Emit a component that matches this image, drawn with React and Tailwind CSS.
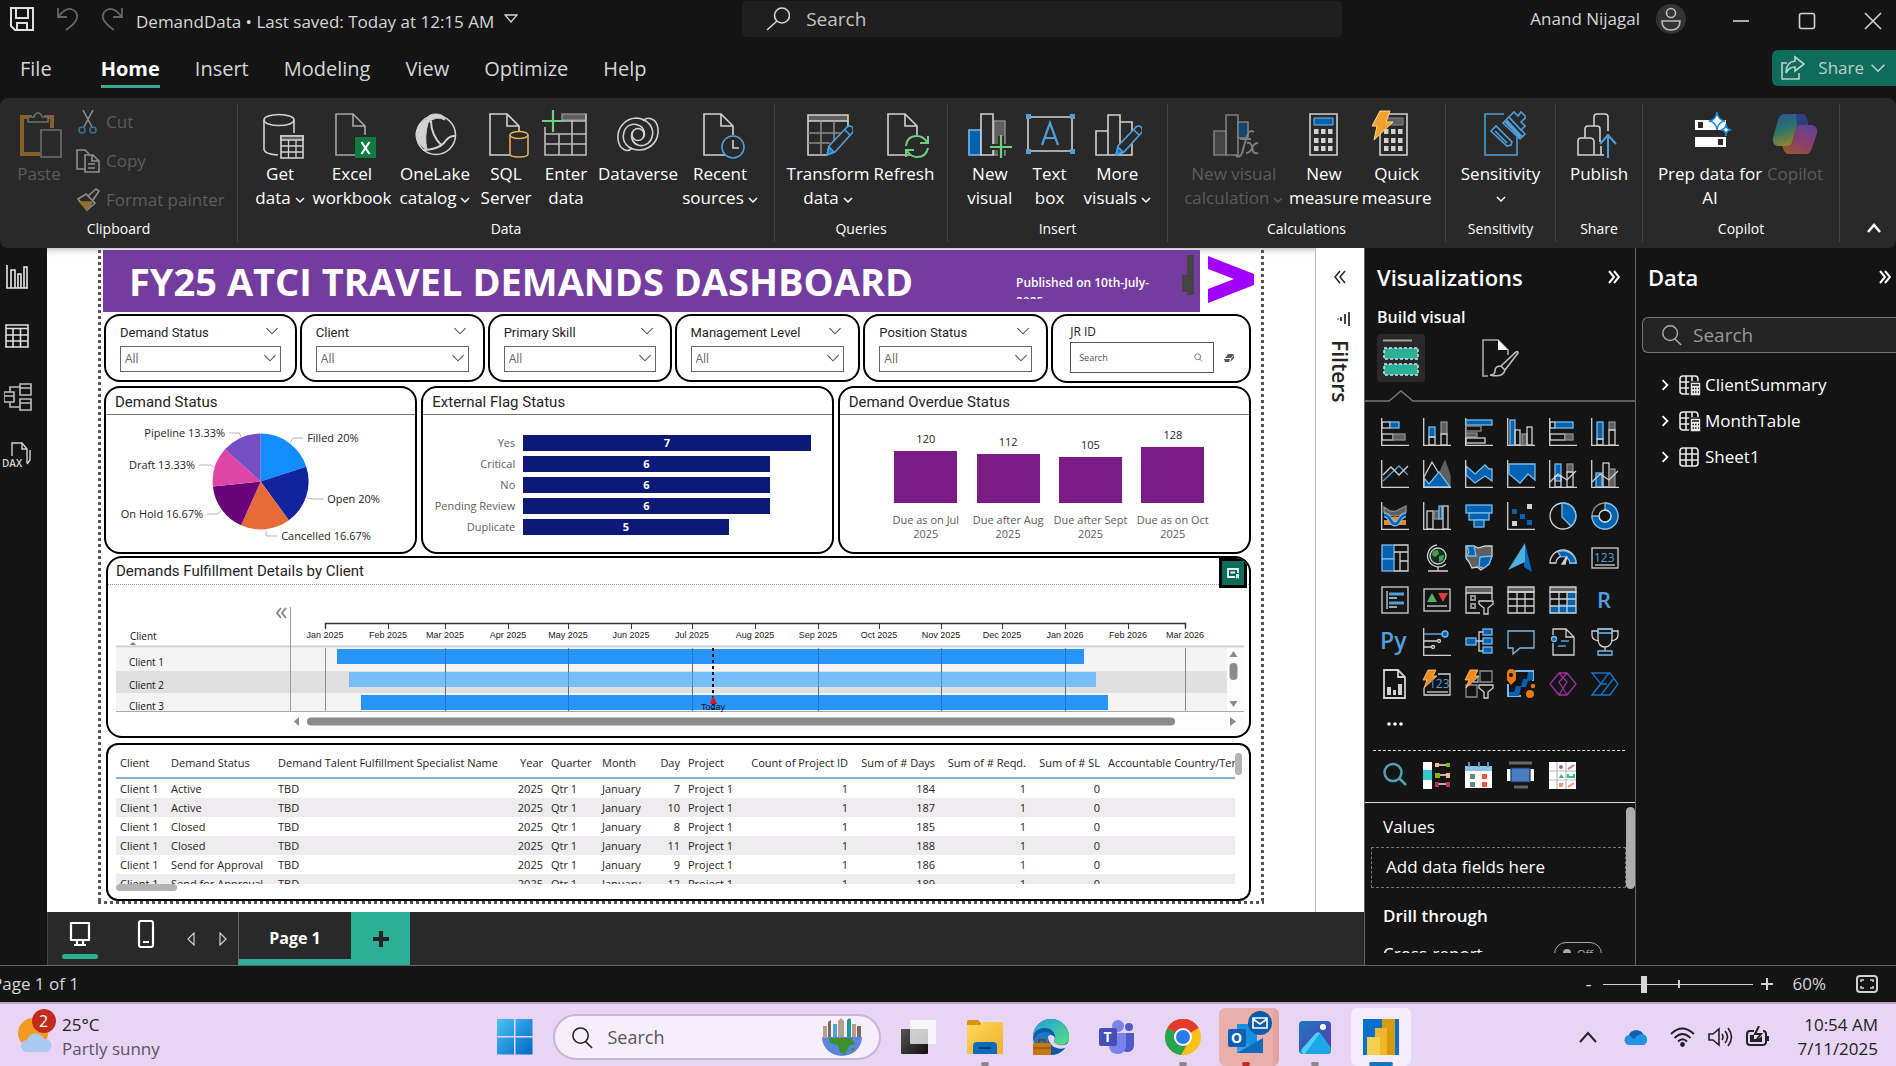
import React from "react";

const W = "#d2d2d2";
const G = "#5f5f5f";
const B = "#0062b1";
const L = "#7cb9e8";
const S = "#4f9fdc";

/* ---------- ribbon icons (50 x 50) ---------- */

function Ico({ size = 50, box = size, children, className = "" }) {
  return (
    <svg width={size} height={size} viewBox={`0 0 ${box} ${box}`} fill="none" stroke={W} strokeWidth="1.6" className={`shrink-0 ${className}`} aria-hidden="true">
      {children}
    </svg>
  );
}

const Doc = () => (
  <>
    <path d="M31 45H9V4h17l12 12v9" />
    <path d="M26 4v12h12" />
  </>
);

const Pencil = () => (
  <g>
    <path d="M24 45l2-9 18-19q3-2 5 0t1 5L32 42z" fill="#292929" stroke={S} />
    <path d="M24 45l2-8 5 5z" fill="#0078d4" stroke={S} />
    <path d="M42 20l5 5" stroke={S} />
  </g>
);

const GridTable = () => (
  <>
    <path d="M5 5h40v6H5z" fill={G} />
    <path d="M5 11v34h18M45 11v6" />
    <path d="M5 23h34M5 33h22M18 11v34M31 11v20" stroke="#8a8a8a" />
  </>
);

const Calc = ({ x = 0 }) => (
  <g transform={`translate(${x} 0)`}>
    <path d="M11 4h27v41H11z" />
    <path d="M15 8h19v7H15z" fill={x ? G : B} stroke={x ? "#8a8a8a" : L} strokeWidth="1" />
    <g fill={W} stroke="none">
      {[19, 28, 36].map((y) => [15, 22, 29].map((cx) => <rect key={cx + "-" + y} x={cx} y={y} width="4.5" height="5" />))}
    </g>
  </g>
);

const ribbonIcons = {
  paste: (
    <Ico className="opacity-60">
      <path d="M18 7H8v37h18M30 7h8v11" stroke="#c8862a" strokeWidth="4" />
      <path d="M14 12V7h6q1-4 4-4t4 4h6v5z" fill="#292929" stroke="#9a9a9a" />
      <path d="M27 20h20v27H27z" fill="#292929" stroke="#9a9a9a" />
    </Ico>
  ),
  getdata: (
    <Ico>
      <ellipse cx="24" cy="10" rx="15" ry="5.5" />
      <path d="M9 10v29q0 5 14 6M39 10v13" />
      <path d="M26 26h22v22H26z" fill="#292929" />
      <path d="M26 26h22v4H26z" fill={G} />
      <path d="M26 36h22M26 42h22M33.500 30v18M41 30v18" strokeWidth="1.300" />
    </Ico>
  ),
  excel: (
    <Ico>
      <g stroke="#a8a8a8"><Doc /></g>
      <path d="M28 27h21v21H28z" fill="#107c41" stroke="none" />
      <path d="M34.500 32l8 12M42.500 32l-8 12" stroke="#fff" strokeWidth="2.200" />
    </Ico>
  ),
  onelake: (
    <Ico>
      <path d="M17 9q1-5 9-5t9 6q-9-5-17 3-4 14-1 27Q5 33 6 23 8 13 17 9z" fill={W} strokeWidth="1" />
      <circle cx="26" cy="25" r="19.500" />
      <path d="M21 11q0 14 11 25M13 40q14 0 21-7 5-8 11-7" strokeWidth="2" />
    </Ico>
  ),
  sql: (
    <Ico>
      <Doc />
      <g stroke="#e8a95c">
        <path d="M29 25v19q0 3 9 3t9-3V25" fill="#292929" />
        <ellipse cx="38" cy="25" rx="9" ry="3.500" fill="#292929" />
      </g>
    </Ico>
  ),
  enter: (
    <Ico>
      <path d="M21 4h24v6H21z" fill={G} stroke="#8a8a8a" />
      <path d="M45 4v41H4V17M4 24h41M4 34h41M18 24v21M31 10v35M21 11h24" stroke="#bdbdbd" />
      <path d="M1 11h22M12 0v22" stroke="#6fcf7c" strokeWidth="2.200" />
    </Ico>
  ),
  dataverse: (
    <Ico>
      <path d="M19 38c-4 5-13 2-14-9C4 17 13 8 24 8c11 1 18 10 15 19-2 7-9 10-14 8-6-2-8-9-5-14" />
      <path d="M30 11c4-5 14-3 15 8 1 12-7 20-18 21-12 0-19-8-16-18 2-7 9-9 14-7 6 2 8 9 5 13" />
      <circle cx="25" cy="24.500" r="6" />
    </Ico>
  ),
  recent: (
    <Ico>
      <Doc />
      <circle cx="38" cy="37" r="11" fill="#292929" stroke={S} />
      <path d="M38 30v8h6" />
    </Ico>
  ),
  transform: (
    <Ico>
      <GridTable />
      <Pencil />
    </Ico>
  ),
  refresh: (
    <Ico>
      <Doc />
      <g stroke="#6fcf7c" strokeWidth="2">
        <path d="M27 36q1-10 11-10 6 0 10 6M49 26v7h-8M49 38q-2 9-11 9-6 0-10-6M27 47v-7h8" />
      </g>
    </Ico>
  ),
  newvisual: (
    <Ico>
      <path d="M4 20h12v25H4z" fill={B} stroke={L} />
      <path d="M29 11h11v34H29z" fill={G} stroke="#8a8a8a" />
      <path d="M16 4h12v41H16z" fill="#292929" />
      <path d="M25 37h22M36 26v22" stroke="#292929" strokeWidth="6" />
      <path d="M25 37h22M36 25v23" stroke="#6fcf7c" strokeWidth="2.200" />
    </Ico>
  ),
  textbox: (
    <Ico>
      <path d="M3 7h44v34H3z" />
      <g fill={S} stroke="none">
        <path d="M1 4h5v5H1zM45 4h5v5h-5zM1 39h5v5H1zM45 39h5v5h-5z" />
      </g>
      <path d="M17 35l8-22 8 22M20 28h10" stroke={S} strokeWidth="2.200" />
    </Ico>
  ),
  morevisuals: (
    <Ico>
      <path d="M4 21h12v24H4zM16 5h12v40H16zM28 12h12v33H28z" />
      <Pencil />
    </Ico>
  ),
  newcalc: (
    <Ico className="opacity-50">
      <path d="M5 21h12v24H5z" fill={G} />
      <path d="M17 5h12v40H17z" />
      <path d="M29 12h10v16H29z" fill={B} />
      <path d="M45 22q-5-3-7 4l-5 17q-2 5-6 3M31 29h11M38 33q4-1 5 4l1 4q1 3 5 2M49 33q-4 0-6 5t-6 5" strokeWidth="2" />
    </Ico>
  ),
  calc: (
    <Ico>
      <Calc />
    </Ico>
  ),
  quick: (
    <Ico>
      <Calc x={-3} />
      <path d="M9 0h10l-4 11h7L3 29l3-14H1z" transform="translate(-1 1)" fill="#f2a22c" stroke="#ffd98a" strokeWidth="1" />
    </Ico>
  ),
  sensitivity: (
    <Ico>
      <g stroke={S}>
        <path d="M28 4H9v41h32V27" />
        <path d="M15 21l5-5 16 16-1 3-4 1z" fill="#292929" />
        <path d="M19 21l12 12" />
        <path d="M27 13l6-6 16 17-5 5z" fill="#292929" />
        <path d="M30 11l15 16" strokeWidth="4" />
        <path d="M33 7l5-5 4 4 3-4 5 5-5 5 4 4-4 4z" fill="#292929" />
      </g>
    </Ico>
  ),
  publish: (
    <Ico>
      <path d="M20 16V7q0-3 3-3h8q3 0 3 3v14" />
      <path d="M11 28v-9q0-3 3-3h9q3 0 3 3v13" />
      <path d="M4 45V31q0-3 3-3h9q4 0 4 4v13zM20 45h10M27 36v9" />
      <path d="M34 48V26M26 34l8-9 8 9" stroke={S} strokeWidth="2" />
    </Ico>
  ),
  prep: (
    <Ico>
      <path d="M10 10h31v10H10zM10 27h31v10H10z" fill="#fff" stroke="none" />
      <path d="M13 12h5v6h-5zM33 29h5v6h-5z" fill="#292929" stroke="none" />
      <g fill="#fff" stroke="#0f8fe0" strokeWidth="1.500">
        <path d="M32 2q1 8 8 9-7 1-8 9-1-8-8-9 7-1 8-9z" />
        <path d="M41 14q0 5 5 6-5 0-5 6 0-6-5-6 5-1 5-6z" />
      </g>
    </Ico>
  ),
  copilot: (
    <Ico className="opacity-60">
      <defs>
        <linearGradient id="cpA" x1="0" y1="0" x2="0.400" y2="1">
          <stop offset="0" stopColor="#2f6fe0" />
          <stop offset="0.500" stopColor="#2aa79b" />
          <stop offset="1" stopColor="#d8c52c" />
        </linearGradient>
        <linearGradient id="cpB" x1="0.700" y1="0" x2="0.200" y2="1">
          <stop offset="0" stopColor="#8b52d8" />
          <stop offset="0.500" stopColor="#c94f9b" />
          <stop offset="1" stopColor="#e8703a" />
        </linearGradient>
      </defs>
      <path d="M14 4h18q4 1 5 6l1 5h-8q-3 0-4 4l-4 14q-1 3-5 3H8q-6-1-5-8L8 10q2-6 6-6z" fill="url(#cpA)" stroke="none" />
      <path d="M36 44H18q-4-1-5-6l-1-2h5q4 0 5-3l4-14q1-4 4-4h12q6 1 5 8l-5 15q-2 6-6 6z" fill="url(#cpB)" stroke="none" />
      <path d="M26 4h6q4 1 5 6l1 5h-8q-2 0-3 2z" fill="#2b4fc4" stroke="none" />
    </Ico>
  ),
};

const Chev = ({ className = "", size = 10, weight = 1.5 }) => (
  <svg width={size} height={size} viewBox="0 0 10 10" fill="none" stroke="currentColor" strokeWidth={weight} className={className} aria-hidden="true">
    <path d="M1 3l4 4 4-4" />
  </svg>
);

function Tool({ icon, w, lines, chev, dim }) {
  return (
    <button className={`flex flex-col items-center text-[17px] leading-6 whitespace-nowrap ${w} ${dim ? "text-[#5c5c5c]" : "text-white"}`}>
      <span className="mb-0.5">{ribbonIcons[icon]}</span>
      {lines.map((t, i) => (
        <span key={i} className="flex items-center gap-1">
          {t}
          {chev && i === lines.length - 1 && <Chev className="mt-1" />}
        </span>
      ))}
    </button>
  );
}

function Group({ w, label, pad = "px-3", children }) {
  return (
    <div className={`flex shrink-0 items-stretch ${w}`}>
      <div className="flex min-w-0 flex-1 flex-col justify-between pt-3 pb-[7px]">
        <div className={`flex items-start ${pad}`}>{children}</div>
        <div className="text-center text-[14px] leading-6 text-white">{label}</div>
      </div>
      <div className="my-1.5 w-px bg-[#434343]" />
    </div>
  );
}

function Ribbon() {
  return (
    <div className="flex h-[150px] shrink-0 overflow-hidden rounded-lg bg-[#292929]">
      <Group w="w-[238px]" label="Clipboard" pad="pl-3">
        <Tool icon="paste" w="w-[54px]" lines={["Paste"]} dim />
        <div className="ml-2.5 flex flex-col gap-[15px] text-[17px] leading-6 text-[#5c5c5c]">
          <button className="flex items-center gap-1.5">
            <Ico size={24} className="opacity-60">
              <path d="M7 0l9 17M17 0L8 17" />
              <circle cx="6" cy="20" r="3" stroke={S} />
              <circle cx="17" cy="20" r="3" stroke={S} />
            </Ico>
            Cut
          </button>
          <button className="flex items-center gap-1.5">
            <Ico size={24} className="opacity-60">
              <path d="M9 20H1V1h8l4 4M9 6h8l6 6v11H9zM16 6v6h6M12 15h7M12 19h7" />
            </Ico>
            Copy
          </button>
          <button className="flex items-center gap-1.5">
            <Ico size={24} className="opacity-60">
              <path d="M2 11l8-5 9 9-8 7z" />
              <path d="M4 14h12l-5 8z" fill="#d9a23b" stroke="#d9a23b" />
              <path d="M12 8l8-7 3 2-6 9" />
            </Ico>
            Format painter
          </button>
        </div>
      </Group>
      <Group w="w-[537px]" label="Data" pad="pl-[11px]">
        <Tool icon="getdata" w="w-[62px]" lines={["Get", "data"]} chev />
        <Tool icon="excel" w="w-[82px]" lines={["Excel", "workbook"]} />
        <Tool icon="onelake" w="w-[84px]" lines={["OneLake", "catalog"]} chev />
        <Tool icon="sql" w="w-[58px]" lines={["SQL", "Server"]} />
        <Tool icon="enter" w="w-[62px]" lines={["Enter", "data"]} />
        <Tool icon="dataverse" w="w-[82px]" lines={["Dataverse"]} />
        <Tool icon="recent" w="w-[82px]" lines={["Recent", "sources"]} chev />
      </Group>
      <Group w="w-[173px]" label="Queries" pad="pl-3">
        <Tool icon="transform" w="w-[82px]" lines={["Transform", "data"]} chev />
        <Tool icon="refresh" w="w-[70px]" lines={["Refresh"]} />
      </Group>
      <Group w="w-[220px]" label="Insert">
        <Tool icon="newvisual" w="w-[60px]" lines={["New", "visual"]} />
        <Tool icon="textbox" w="w-[60px]" lines={["Text", "box"]} />
        <Tool icon="morevisuals" w="w-[76px]" lines={["More", "visuals"]} chev />
      </Group>
      <Group w="w-[278px]" label="Calculations">
        <Tool icon="newcalc" w="w-[108px]" lines={["New visual", "calculation"]} chev dim />
        <Tool icon="calc" w="w-[73px]" lines={["New", "measure"]} />
        <Tool icon="quick" w="w-[73px]" lines={["Quick", "measure"]} />
      </Group>
      <Group w="w-[110px]" label="Sensitivity" pad="justify-center">
        <button className="flex flex-col items-center text-[17px] leading-6 text-white">
          <span className="mb-0.5">{ribbonIcons.sensitivity}</span>
          Sensitivity
          <Chev className="mt-2" />
        </button>
      </Group>
      <Group w="w-[87px]" label="Share" pad="justify-center">
        <Tool icon="publish" w="w-[70px]" lines={["Publish"]} />
      </Group>
      <Group w="w-[197px]" label="Copilot" pad="pl-3.5">
        <Tool icon="prep" w="w-[106px]" lines={["Prep data for", "AI"]} />
        <Tool icon="copilot" w="w-[64px]" lines={["Copilot"]} dim />
      </Group>
      <div className="flex flex-1 items-end justify-end pr-3.5 pb-3">
        <button aria-label="Collapse ribbon" className="text-white">
          <svg width="16" height="16" viewBox="0 0 16 16" fill="none" stroke="currentColor" strokeWidth="2.500"><path d="M2 12l6-7 6 7" /></svg>
        </button>
      </div>
    </div>
  );
}

/* ---------- window title and menu ---------- */

const SearchGlyph = ({ size = 24, flip, color = "currentColor" }) => (
  <svg width={size} height={size} viewBox="0 0 24 24" fill="none" stroke={color} strokeWidth="1.600" className="shrink-0" aria-hidden="true">
    {flip ? <path d="M16 1a7 7 0 1 1 0 15 7 7 0 0 1 0-15zM11 14L1 23" /> : <path d="M10 2a8 8 0 1 1 0 16 8 8 0 0 1 0-16zM15 16l7 7" />}
  </svg>
);

function TitleBar() {
  return (
    <header className="flex h-[38px] shrink-0 items-center text-[#d6d6d6]">
      <div className="flex flex-[746_1_0%] items-center pl-2.5">
        <button aria-label="Save">
          <Ico size={24}>
            <path d="M1 1h22v22H5l-4-4zM6 1v10h12V1M7 23v-7h10v7" strokeWidth="2" stroke="#e0e0e0" />
          </Ico>
        </button>
        <button aria-label="Undo" className="ml-5.5">
          <Ico size={24}><path d="M2 1v9h9M2 10Q9 1 15 2q7 2 6 9-1 5-11 12" stroke="#666" strokeWidth="1.800" /></Ico>
        </button>
        <button aria-label="Redo" className="ml-5">
          <Ico size={24}><path d="M22 1v9h-9M22 10Q15 1 9 2q-7 2-6 9 1 5 11 12" stroke="#666" strokeWidth="1.800" /></Ico>
        </button>
        <button className="ml-3 flex items-center gap-2.5 pt-1.5 text-[17px] leading-6 whitespace-nowrap">
          DemandData • Last saved: Today at 12:15 AM
          <svg width="14" height="14" viewBox="0 0 14 14" fill="none" stroke="currentColor" strokeWidth="1.300" className="mb-1.5"><path d="M1 3h12L7 10z" /></svg>
        </button>
      </div>
      <label className="flex h-9 w-[600px] items-center gap-4 rounded bg-[#1f1f1f] pl-6">
        <SearchGlyph flip />
        <input aria-label="Search" placeholder="Search" className="min-w-0 flex-1 bg-transparent text-[19px] leading-7 text-white placeholder-[#c4c4c4] outline-none" />
      </label>
      <div className="flex flex-[550_1_0%] items-center justify-end pr-3.5">
        <span className="text-[17px] leading-6 whitespace-nowrap">Anand Nijagal</span>
        <button aria-label="Account" className="ml-4 flex size-7.5 items-center justify-center rounded-full bg-[#333]">
          <Ico size={24}>
            <circle cx="12" cy="6" r="4.500" stroke="#bdbdbd" />
            <path d="M3 14h18q0 9-9 9t-9-9z" stroke="#bdbdbd" />
          </Ico>
        </button>
        <button aria-label="Minimize" className="mt-1 ml-11.5"><Ico size={18}><path d="M1 9h16" /></Ico></button>
        <button aria-label="Maximize" className="mt-1 ml-12"><Ico size={18}><rect x="1.500" y="1.500" width="15" height="15" rx="2" /></Ico></button>
        <button aria-label="Close" className="mt-1 ml-12"><Ico size={18}><path d="M1 1l16 16M17 1L1 17" /></Ico></button>
      </div>
    </header>
  );
}

function Menu() {
  const items = ["File", "Home", "Insert", "Modeling", "View", "Optimize", "Help"];
  return (
    <nav className="flex h-[60px] shrink-0 items-center text-[20px] leading-8 text-[#d6d6d6]">
      <div className="flex flex-1 items-center gap-[35px] pt-0.5 pl-5">
        {items.map((t) =>
          t === "Home" ? (
            <button key={t} className="ml-3.5 border-b-3 border-[#3aa992] pt-[3px] font-bold text-white">{t}</button>
          ) : (
            <button key={t}>{t}</button>
          )
        )}
      </div>
      <button className="flex h-9 items-center gap-1.5 rounded-l-md bg-[#0f6b5b] pr-2.5 pl-2 text-[17px] text-[#b9d3cc]">
        <Ico size={26}>
          <path d="M7 8H2v16h17v-6" stroke="#b9d3cc" />
          <path d="M15 2l9 7-9 7v-4Q9 12 6 18q0-11 9-12z" stroke="#b9d3cc" />
        </Ico>
        <span className="ml-1.5">Share</span>
        <Chev size={16} weight={1} />
      </button>
    </nav>
  );
}

/* ---------- left navigation ---------- */

function LeftNav() {
  return (
    <nav className="flex w-[47px] shrink-0 flex-col items-start gap-[34px] bg-[#141414] pt-4 pl-1">
      <button aria-label="Report view"><Ico size={26}><path d="M3 1v23h21M7 24V6h4v18M14 24V10h3v14M20 24V3h3v21" stroke="#e8e8e8" /></Ico></button>
      <button aria-label="Table view" className="-mt-px"><Ico size={26}><path d="M2 2h22v22H2zM2 5.500h22M2 12h22M2 18h22M9 6v18M16.500 6v18" stroke="#e0e0e0" strokeWidth="1.600" /></Ico></button>
      <button aria-label="Model view"><Ico size={28}><path d="M16 1h11v11H16zM16 5h11M16 16h11v11H16zM16 20h11M0 9h10v10H0zM0 13h10M6 9V4h10M6 19v5h10" stroke="#bdbdbd" /></Ico></button>
      <button aria-label="DAX query view" className="-mt-1">
        <svg width="28" height="28" viewBox="0 0 28 28" fill="none" stroke={W} strokeWidth="1.400" overflow="visible">
          <path d="M8 15V2h10l5 6v14M18 2v6h5M26 9v10l-3 4" />
          <path d="M0 16h20v12H0z" fill="#141414" stroke="none" />
          <text x="-2" y="26" fontSize="10" fontWeight="600" fill={W} stroke="none" fontFamily="Open Sans, sans-serif">DAX</text>
        </svg>
      </button>
    </nav>
  );
}

/* ---------- report ---------- */

const card = "rounded-2xl border-2 border-black bg-white";

function Slicer({ title }) {
  return (
    <div className={`${card} h-[68px] pt-[7px] pr-3.5 pl-3.5`}>
      <div className="flex items-center justify-between pr-0.5 font-[Roboto] text-[13px] leading-5 whitespace-nowrap text-[#252423]">
        {title}
        <Chev size={14} weight={0.8} className="mb-1 text-[#555]" />
      </div>
      <div className="relative mt-0.5">
        <select aria-label={title} className="h-[26px] w-full appearance-none border border-[#666] bg-white pl-1 text-[12px] text-[#666]">
          <option>All</option>
        </select>
        <Chev size={14} weight={0.8} className="pointer-events-none absolute top-1.5 right-1 text-[#555]" />
      </div>
    </div>
  );
}

function JrSlicer() {
  return (
    <div className={`${card} h-[69px] pt-1.5 pl-[17px]`}>
      <div className="text-[12px] leading-5 text-[#252423]">JR ID</div>
      <div className="flex items-center gap-2.5">
        <label className="flex h-[31px] w-[144px] items-center border border-[#555] pr-2.5 pl-2">
          <input aria-label="JR ID" placeholder="Search" className="min-w-0 flex-1 text-[9px] placeholder-[#555] outline-none" />
          <SearchGlyph size={9} color="#333" />
        </label>
        <button aria-label="Clear">
          <svg width="10" height="8" viewBox="0 0 10 8" fill="#555"><path d="M4 0h6L7 4H1zM0 5h6L5 8H1zM7 5l3-4v3L6.500 8z" /></svg>
        </button>
      </div>
    </div>
  );
}

function ChartCard({ title, children }) {
  return (
    <div className={`${card} flex h-[168px] flex-col overflow-hidden`}>
      <h3 className="h-[27px] border-b border-[#777] pl-[9px] font-[Roboto] text-[15px] leading-7 text-[#252423]">{title}</h3>
      {children}
    </div>
  );
}

const slices = [
  { t: "Filled 20%", v: 20, c: "#118dff", x: 201, y: 27, a: "start", l: "M184 28L187 23H197" },
  { t: "Open 20%", v: 20, c: "#12239e", x: 221, y: 88, a: "start", l: "M201 83L206 84H217" },
  { t: "Cancelled 16.67%", v: 16.67, c: "#e66c37", x: 175, y: 125, a: "start", l: "M160 116V121H171" },
  { t: "On Hold 16.67%", v: 16.67, c: "#6b007b", x: 97, y: 103, a: "end", l: "M115 96L111 99H101" },
  { t: "Draft 13.33%", v: 13.33, c: "#e044a7", x: 89, y: 54, a: "end", l: "M108 53L105 50H93" },
  { t: "Pipeline 13.33%", v: 13.33, c: "#744ec2", x: 119, y: 22, a: "end", l: "M135 22L133 18H123" },
];

function Pie() {
  let acc = 0;
  const cx = 154.5, cy = 66.5, r = 48;
  const pt = (f) => [cx + r * Math.sin(f * Math.PI / 50), cy - r * Math.cos(f * Math.PI / 50)];
  return (
    <svg viewBox="0 0 309 137" className="min-h-0 flex-1" fontSize="11" role="img" aria-label="Demand Status">
      {slices.map((s) => {
        const [x1, y1] = pt(acc);
        acc += s.v;
        const [x2, y2] = pt(acc);
        return (
          <g key={s.t}>
            <path d={`M${cx} ${cy}L${x1} ${y1}A${r} ${r} 0 0 1 ${x2} ${y2}z`} fill={s.c} />
            <path d={s.l} fill="none" stroke="#b3b3b3" />
            <text x={s.x} y={s.y} textAnchor={s.a} fill="#252423">{s.t}</text>
          </g>
        );
      })}
    </svg>
  );
}

const flags = [["Yes", 7], ["Critical", 6], ["No", 6], ["Pending Review", 6], ["Duplicate", 5]];

function FlagBars() {
  return (
    <div className="flex flex-col gap-1 pt-[19px] pr-[21px] text-[11px] leading-4">
      {flags.map(([t, v]) => (
        <div key={t} className="flex h-[17px] items-center">
          <span className="w-[100px] shrink-0 pr-2 text-right text-[#605e5c]">{t}</span>
          <div className="flex-1">
            <div className="flex h-4 items-center justify-center bg-[#0d1976] font-bold text-white" style={{ width: `${(v / 7) * 100}%` }}>{v}</div>
          </div>
        </div>
      ))}
    </div>
  );
}

const overdue = [[120, "Due as on Jul"], [112, "Due after Aug"], [105, "Due after Sept"], [128, "Due as on Oct"]];

function OverdueColumns() {
  return (
    <div className="grid h-[126px] grid-cols-4 items-end pr-[35px] pl-[45px] text-center text-[11px]">
      {overdue.map(([v, t]) => (
        <div key={t} className="flex flex-col items-center">
          <span className="leading-4 text-[#252423]">{v}</span>
          <div className="mt-1 w-[63px] bg-[#7b1b86]" style={{ height: Math.round(v * 0.437) }} />
          <span className="mt-2.5 leading-3.5 whitespace-nowrap text-[#605e5c]">{t}<br />2025</span>
        </div>
      ))}
    </div>
  );
}

const months = [
  ["Jan 2025", 217], ["Feb 2025", 280], ["Mar 2025", 337], ["Apr 2025", 400], ["May 2025", 460], ["Jun 2025", 523], ["Jul 2025", 584],
  ["Aug 2025", 647], ["Sep 2025", 710], ["Oct 2025", 771], ["Nov 2025", 833], ["Dec 2025", 894], ["Jan 2026", 957], ["Feb 2026", 1020], ["Mar 2026", 1077],
];

function Gantt() {
  return (
    <svg viewBox="0 0 1141 146" className="mt-[5px] w-full" fontFamily="Liberation Sans, sans-serif" fontSize="9" role="img" aria-label="Demands Fulfillment Details by Client">
      <path d="M8 58h1111v23H8zM8 103h1111v18H8z" fill="#f4f4f4" />
      <path d="M8 81h1111v22H8z" fill="#e0e0e0" />
      <path d="M8 56.500h1128" stroke="#d0d0d0" strokeWidth="2" />
      <path d="M8 121.500h1128" stroke="#aaa" />
      <path d="M182.500 17v104" stroke="#999" />
      <path d="M173 18l-4 5 4 5M178 18l-4 5 4 5" fill="none" stroke="#888" strokeWidth="2" />
      <g fontFamily="Open Sans, sans-serif" fill="#111" fontSize="10">
        <text x="22" y="50">Client</text>
        <text x="21" y="76">Client 1</text>
        <text x="21" y="99">Client 2</text>
        <text x="21" y="120">Client 3</text>
      </g>
      <path d="M22 55l3-3 3 3z" fill="#777" />
      <path d="M217.500 38V33.500H1077.500V38" stroke="#333" strokeWidth="1.500" fill="none" />
      {months.map(([t, x], i) => (
        <g key={t}>
          <path d={`M${x + 0.5} 33v6`} stroke="#333" />
          <text x={x} y="48" textAnchor="middle" fill="#222">{t}</text>
          {i % 2 === 0 && <path d={`M${x + 0.5} 58v63`} stroke="#888" />}
        </g>
      ))}
      <path d="M229 59h747v15H229zM253 105h747v15H253z" fill="#2895fd" />
      <path d="M241 82h747v15H241z" fill="#78bdfd" />
      {months.map(([t, x], i) => i > 0 && i < 14 && i % 2 === 0 && <path key={t} d={`M${x + 0.5} 59v62`} stroke="#00408a" strokeOpacity="0.350" />)}
      <path d="M605 58v62" stroke="#111" strokeWidth="2" strokeDasharray="3 3" />
      <path d="M602 114l3-9 4 9z" fill="#e81123" />
      <text x="605" y="120" textAnchor="middle" fill="#111">Today</text>
      <path d="M1121 58h15v63h-15zM183 126h953v14H183z" fill="#fcfcfc" />
      <path d="M1121.500 67l4-6 4 6zM1121.500 111l4 6 4-6zM191 127v9l-5-4.500zM1122 127v9l6-4.500z" fill="#8b8b8b" />
      <rect x="1121.500" y="73" width="8" height="17" rx="4" fill="#8b8b8b" />
      <rect x="199" y="127.500" width="868" height="8" rx="4" fill="#8b8b8b" />
    </svg>
  );
}

function GanttCard() {
  return (
    <section className={`${card} mt-0.5 ml-0.5 h-[182px] overflow-hidden`}>
      <div className="relative flex h-[27px] items-center border-b border-dotted border-[#999] pt-px pl-2">
        <h3 className="font-[Roboto] text-[15px] text-[#252423]">Demands Fulfillment Details by Client</h3>
        <button aria-label="Personalize visual" className="absolute top-0 right-0.5 flex h-[30px] w-7 items-center justify-center border-3 border-black bg-[#0c6b5b]">
          <svg width="14" height="14" viewBox="0 0 14 14" fill="none" stroke="#e8f4f1" strokeWidth="1.800"><path d="M9 11H2V3h10v4M4.500 6.500H9" /><path d="M10 8h3v5l-1.500-1.500L10 13z" fill="#e8f4f1" stroke="none" /></svg>
        </button>
      </div>
      <Gantt />
    </section>
  );
}

const cols = [
  ["Client", "w-[51px]"], ["Demand Status", "w-[107px]"], ["Demand Talent Fulfillment Specialist Name", "w-[237px]"], ["Year", "w-[36px]", 1], ["Quarter", "w-[51px]"],
  ["Month", "w-[55px]"], ["Day", "w-[31px]", 1], ["Project", "w-[57px]"], ["Count of Project ID", "w-[111px]", 1], ["Sum of # Days", "w-[87px]", 1],
  ["Sum of # Reqd.", "w-[91px]", 1], ["Sum of # SL", "w-[74px]", 1], ["Accountable Country/Territory", "w-[180px]"],
];
const rows = [["Active", 7, 184], ["Active", 10, 187], ["Closed", 8, 185], ["Closed", 11, 188], ["Send for Approval", 9, 186], ["Send for Approval", 12, 189]].map(
  ([s, d, n]) => ["Client 1", s, "TBD", "2025", "Qtr 1", "January", d, "Project 1", 1, n, 1, 0, ""]
);

function DataTable() {
  return (
    <section className="mt-[5px] ml-0.5 h-[158px] rounded-xl border-2 border-black bg-white pt-2 pl-2">
      <div className="flex items-start">
        <div className="h-[131px] min-w-0 flex-1 overflow-hidden">
          <table className="w-[1168px] table-fixed border-collapse text-[11px] text-[#252423]">
            <thead>
              <tr className="border-b-2 border-[#7fb6de]">
                {cols.map(([t, w, r]) => (
                  <th key={t} className={`h-[25px] px-1 pb-1 font-normal whitespace-nowrap ${w} ${r ? "text-right" : "text-left"}`}>{t}</th>
                ))}
              </tr>
            </thead>
            <tbody>
              {rows.map((r, i) => (
                <tr key={i} className="h-[19px] odd:bg-white even:bg-[#eeecee]">
                  {r.map((c, j) => (
                    <td key={j} className={`px-1 leading-[19px] whitespace-nowrap ${cols[j][2] ? "text-right" : ""}`}>{c}</td>
                  ))}
                </tr>
              ))}
            </tbody>
          </table>
        </div>
        <div className="mr-[7px] h-[22px] w-[7px] rounded-full bg-[#b3b3b3]" />
      </div>
      <div className="relative h-[7px] w-[61px] rounded-full bg-[#b3b3b3]" />
    </section>
  );
}

const vStrip = "w-[3px] shrink-0 bg-[repeating-linear-gradient(180deg,#555_0_3px,transparent_3px_6px)]";

function Report() {
  return (
    <div className="min-w-0 flex-1 bg-white px-[51px] pt-0.5 shadow-[inset_0_8px_8px_-8px_#999]">
      <div className="flex">
        <div className={vStrip} />
        <div className="min-w-0 flex-1 pr-[7px] pl-0.5">
          <div className="flex h-[62px] items-stretch">
            <div className="flex min-w-0 flex-1 items-center bg-[#753c9f] pl-[26px]">
              <h1 className="text-[38px] leading-none font-bold whitespace-nowrap text-white">FY25 ATCI TRAVEL DEMANDS DASHBOARD</h1>
              <div className="mt-2.5 ml-auto h-[26px] w-[150px] shrink-0 overflow-hidden text-[12px] leading-[19px] font-semibold text-white">Published on 10th-July-2025</div>
              <svg width="14" height="40" viewBox="0 0 14 40" className="mr-1 mb-3 ml-4 shrink-0"><path d="M5 0h7v40H5v-3H0V20h5z" fill="#444" /></svg>
            </div>
            <svg width="46" height="48" viewBox="0 0 46 48" className="mt-1.5 ml-2 shrink-0"><path d="M0 0l46 18v11L0 47V33l26-10L0 13z" fill="#a100ff" /></svg>
          </div>
          <div className="pr-[3px] pl-px">
            <div className="mt-0.5 grid grid-cols-[193fr_185fr_184fr_186fr_185fr_200fr] gap-[3px]">
              <Slicer title="Demand Status" />
              <Slicer title="Client" />
              <Slicer title="Primary Skill" />
              <Slicer title="Management Level" />
              <Slicer title="Position Status" />
              <JrSlicer />
            </div>
            <div className="mt-[3px] grid grid-cols-[313fr_412fr_413fr] gap-1">
              <ChartCard title="Demand Status"><Pie /></ChartCard>
              <ChartCard title="External Flag Status"><FlagBars /></ChartCard>
              <ChartCard title="Demand Overdue Status"><OverdueColumns /></ChartCard>
            </div>
            <GanttCard />
            <DataTable />
          </div>
        </div>
        <div className={vStrip} />
      </div>
      <div className="h-[3px] bg-[repeating-linear-gradient(90deg,#555_0_3px,transparent_3px_6px)]" />
    </div>
  );
}

function PageTabs() {
  return (
    <div className="flex h-[53px] shrink-0 items-stretch border-l border-[#444] bg-[#292929] text-white">
      <button aria-label="Desktop layout" className="ml-3.5 flex w-9 flex-col items-center justify-between pt-2.5 pb-1.5">
        <Ico size={26}><path d="M4 1h18v17H4zM7 23h12M10 18v5M16 18v5" stroke="#fff" strokeWidth="2.200" strokeLinejoin="round" /></Ico>
        <span className="h-[5px] w-full rounded-full bg-[#2fae97]" />
      </button>
      <button aria-label="Mobile layout" className="ml-[34px] flex items-start pt-2"><Ico size={28}><rect x="7" y="1" width="14" height="26" rx="2" stroke="#fff" strokeWidth="2.200" /><path d="M11 22h6" stroke="#fff" strokeWidth="2" /></Ico></button>
      <button aria-label="Previous page" className="ml-6"><Ico size={14}><path d="M10 1v12L4 7z" strokeWidth="1.200" /></Ico></button>
      <button aria-label="Next page" className="ml-[18px]"><Ico size={14}><path d="M4 1v12l6-6z" strokeWidth="1.200" /></Ico></button>
      <button className="ml-2 w-[113px] border-b-6 border-l border-b-[#2fae97] border-l-[#666] pt-1 text-[16px] font-bold">Page 1</button>
      <button aria-label="New page" className="flex w-[59px] items-center justify-center bg-[#2bae96]">
        <svg width="16" height="16" viewBox="0 0 16 16" stroke="#222" strokeWidth="4"><path d="M8 0v16M0 8h16" /></svg>
      </button>
    </div>
  );
}

function Filters() {
  return (
    <aside className="flex w-[49px] shrink-0 flex-col items-center border-l border-[#bbb] bg-white pt-[22px] text-[#252423]">
      <button aria-label="Expand filters"><svg width="12" height="14" viewBox="0 0 12 14" fill="none" stroke="currentColor" strokeWidth="1.500"><path d="M6 1L1 7l5 6M11 1L6 7l5 6" /></svg></button>
      <svg width="14" height="14" viewBox="0 0 14 14" stroke="currentColor" strokeWidth="1.700" className="mt-7 ml-2"><path d="M12 0v14M8 2v10M4 5v4M1 6.500v1" /></svg>
      <span className="mt-3.5 text-[21px] leading-6 font-semibold [writing-mode:vertical-rl]">Filters</span>
    </aside>
  );
}

/* ---------- visualization gallery (28 x 28) ---------- */

const Ax = () => <path d="M.7 0v27.300H28" />;
const Bl = (p) => <rect fill={B} stroke={L} {...p} />;
const Gr = (p) => <rect fill={G} stroke="#8f8f8f" {...p} />;
const Ou = (p) => <rect {...p} />;
const Bolt = () => <path d="M5 0h8l-3 6h4L1 18l3-8H0z" fill="#f08a1d" stroke="#ffd08a" strokeWidth=".8" />;
const Funnel = () => <path d="M14 15h14v3l-5 4v6h-4v-6l-5-4z" fill="#141414" />;
const T = ({ children, ...p }) => <text fill={S} stroke="none" fontFamily="Open Sans, sans-serif" {...p}>{children}</text>;

const gallery = [
  <><Ax /><Ou x="1" y="4" width="8" height="6" /><Bl x="9" y="4" width="9" height="6" /><Ou x="1" y="16" width="11" height="6" /><Gr x="12" y="16" width="12" height="6" /></>,
  <><Ax /><Bl x="6" y="9" width="6" height="10" /><Ou x="6" y="19" width="6" height="8" /><Gr x="18" y="4" width="6" height="12" /><Ou x="18" y="16" width="6" height="11" /></>,
  <><Ax /><Bl x="1" y="2" width="26" height="5" /><Ou x="1" y="8" width="15" height="5" stroke="#8f8f8f" /><Gr x="1" y="15" width="11" height="4" /><Ou x="1" y="20" width="19" height="5" /></>,
  <><Ax /><Bl x="3" y="2" width="5" height="25" /><Ou x="8" y="12" width="5" height="15" /><Gr x="15" y="16" width="5" height="11" /><Ou x="20" y="9" width="5" height="18" /></>,
  <><Ax /><Ou x="1" y="4" width="5" height="6" /><Bl x="6" y="4" width="18" height="6" /><Ou x="1" y="16" width="15" height="6" /><Gr x="16" y="16" width="8" height="6" /></>,
  <><Ax /><Bl x="6" y="4" width="6" height="17" /><Ou x="6" y="21" width="6" height="6" /><Gr x="18" y="4" width="6" height="8" /><Ou x="18" y="12" width="6" height="15" /></>,
  <><Ax /><path d="M2 21L18 6l9 9" stroke={S} /><path d="M2 15l8-8 8 8 9-9" /></>,
  <><path d="M17 12l5-11 5 14v12H17z" fill={G} stroke={G} /><path d="M1 17L9 2l9 15" /><path d="M1 27V18l5 6L16 12l11 15z" fill={B} stroke={L} /><Ax /></>,
  <><path d="M1 6l9 8L20 5l4 4h3v12l-7-5-10 7-9-8z" fill={B} stroke={L} /><Ax /></>,
  <><path d="M2 4h26v16l-7-6-8 9L2 14z" fill={B} stroke={L} /><Ax /></>,
  <><Bl x="6" y="4" width="6" height="17" /><Ou x="6" y="16" width="6" height="11" /><Gr x="18" y="4" width="6" height="8" /><Ou x="18" y="12" width="6" height="15" /><path d="M1 22l8-8 9 6L27 11" /><Ax /></>,
  <><Bl x="5" y="13" width="6" height="14" /><Ou x="12" y="3" width="6" height="24" /><Gr x="18" y="9" width="6" height="18" /><path d="M1 22l8-8 9 6L27 11" /><Ax /></>,
  <><path d="M3 18h22v5H3z" fill="#f08a1d" stroke="none" /><path d="M11 15h7v4h-7z" fill="#f08a1d" stroke="none" /><path d="M3 5l6 4q5 1 8-1l8-4v6l-6 3q-5 2-10 0l-6-3z" fill={G} stroke="#8f8f8f" /><path d="M3 13c7 0 6 9 11 9s4-9 11-9" stroke={L} strokeWidth="5" /><path d="M3 13c7 0 6 9 11 9s4-9 11-9" stroke={B} strokeWidth="2.500" /><Ax /></>,
  <><Ou x="4" y="9" width="6" height="18" /><Gr x="11" y="9" width="5" height="8" /><Bl x="16" y="4" width="3" height="13" /><Ou x="20" y="4" width="5" height="23" /><Ax /></>,
  <><Bl x="1" y="3" width="26" height="8" /><Bl x="4" y="11" width="20" height="7" /><Bl x="9" y="18" width="10" height="7" /></>,
  <><Ax /><path d="M5 7h5v5H5zM13 12h5v5h-5zM20 18h5v5h-5z" fill={B} stroke="none" /><path d="M20 2h5v5h-5zM5 19h5v5H5z" fill={W} stroke="none" /></>,
  <><circle cx="14" cy="14" r="13" /><path d="M13 1v14l9 9A13 13 0 0 0 13 1z" fill={B} stroke={L} /></>,
  <><circle cx="14" cy="14" r="13" stroke="#8f8f8f" /><path d="M14 1a13 13 0 1 1-13 13h7a6 6 0 1 0 6-6z" fill={B} stroke={L} /><circle cx="14" cy="14" r="6" /></>,
  <><Bl x="1" y="1" width="12" height="14" /><Bl x="1" y="15" width="12" height="12" /><path d="M13 1h14v26H13M13 8h14M19 8v19M19 17h8" /></>,
  <><circle cx="15" cy="12" r="8" fill="#182f1f" /><path d="M10 7l5-1 1 4-4 3-3-2zM16 12l5-1-1 5-4 2z" fill="#3fa25a" stroke="none" /><path d="M14 1a11 11 0 1 0 9 19M15 23v4M5 27h20" /></>,
  <><path d="M1 2h8l4 2 7-2h7v10l-3 8-8 6-4-3-5 1-3-6-3-4z" fill={G} /><path d="M2 2h7l2 10H2l2-4zM15 13l12-1-3 8-5 4-5-1z" fill={B} stroke={L} /></>,
  <><path d="M18-1l7 29-8-5z" fill="#0b6cbc" stroke="none" /><path d="M18-1L1 26l17-8z" fill="#52b0e0" stroke="none" /></>,
  <><path d="M1 19a13 13 0 0 1 26 0h-6a7 7 0 0 0-14 0z" /><path d="M9 8a13 13 0 0 1 18 11h-6a7 7 0 0 0-9-6z" fill={B} stroke={L} /><path d="M13 20l5-8-2 8z" fill={W} /></>,
  <><Ou x="1" y="4" width="26" height="20" /><T x="3" y="18" fontSize="12">123</T><path d="M4 21h20" /></>,
  <><Ou x="1" y="1" width="26" height="26" /><path d="M6 5v18" /><path d="M8 8h15M8 17h15" stroke={S} strokeWidth="3" /><path d="M8 12h8M8 21h8" /></>,
  <><Ou x="1" y="3" width="26" height="22" /><path d="M4 16l5-9 5 9z" fill="#4fb463" stroke="none" /><path d="M15 7h10l-5 9z" fill="#e03a44" stroke="none" /><path d="M4 20h20" /></>,
  <><path d="M1 1h26v6H1z" fill={G} /><path d="M27 7v7M1 7v20h14" /><path d="M6 10h4v4H6zM6 18h4v4H6z" stroke="#8f8f8f" strokeWidth="2" /><Funnel /></>,
  <><path d="M1 1h26v5H1z" fill={G} /><path d="M1 6h26v21H1zM1 13h26M1 20h26M10 6v21M18 6v21" /></>,
  <><path d="M10 18h17v9H10zM18 6h9v12h-9zM1 20h9v7H1z" fill={B} stroke="none" /><path d="M1 1h26v5H1z" fill={G} /><path d="M1 6h26v21H1zM1 13h26M1 20h26M10 6v21M18 6v21" /></>,
  <T x="6" y="22" fontSize="22" fontWeight="600">R</T>,
  <T x="-1" y="21" fontSize="23" fontWeight="600">Py</T>,
  <><Ax /><path d="M1 6h18" stroke={L} /><circle cx="22" cy="6" r="3" fill={B} stroke={L} /><path d="M1 13h13M1 19h7" /><circle cx="16" cy="13" r="1.500" /><circle cx="10" cy="19" r="1.500" /></>,
  <><path d="M11 13h7M18 4H14v19h4" /><Bl x="1" y="10" width="10" height="7" /><Bl x="18" y="1" width="9" height="6" /><Bl x="18" y="10" width="9" height="6" /><Bl x="18" y="19" width="9" height="6" /></>,
  <path d="M1 3h26v17H13l-7 6v-6H1z" stroke={L} />,
  <><path d="M4 7V1h13l8 8v18H4V15M17 1v8h8" /><circle cx="5" cy="11" r="2.500" fill={B} stroke={L} /><path d="M12 13h8M9 18h8" stroke={S} /></>,
  <><path d="M7 1h14v9q0 9-7 9t-7-9zM7 3H1v4q0 5 7 6M21 3h6v4q0 5-7 6M14 19v4" /><path d="M7 1h14v4H7zM7 23h14v4H7z" stroke={L} /></>,
  <><path d="M3 0h14l7 7v21H3zM17 0v7h7" strokeWidth="1.800" /><path d="M6 17h4v8H6zM12 20h3v5h-3zM17 14h4v11h-4z" fill={W} stroke="none" /></>,
  <><path d="M15 4h12v21H1v-7" /><Bolt /><T x="6" y="18" fontSize="12">123</T><path d="M4 22h21" /></>,
  <><path d="M15 1h12v11H15zM1 15h11v12H1z" stroke="#8f8f8f" /><path d="M8 12h5V6" stroke={L} /><Bolt /><Funnel /></>,
  <><path d="M8 1h18v10M1 14v12h13" stroke={L} strokeWidth="2" /><path d="M26 2v8l-5 1-2 6h-5l-2 9H2v-4h5l2-6h5l2-7h4l1-7z" fill={B} stroke="none" /><path d="M4-1q5 0 5 5v6l-5 5-4-5V4q0-5 4-5z" fill="#e8790c" stroke="none" /><circle cx="4" cy="5" r="2" fill="#141414" stroke="none" /><circle cx="23" cy="24" r="4" fill="#e8790c" stroke="none" /><circle cx="26" cy="16" r="2.200" fill="#e8790c" stroke="none" /></>,
  <path d="M10 3h8l9 11-9 11h-8L1 14zM10 3l8 9-8 13M18 3l-8 9 8 13" stroke="#a0309f" />,
  <path d="M1 3h18l8 11-8 11H1l9-11zM18 3L1 25M23 8L10 25M10 14h6" stroke="#1273d0" />,
];

const customVisuals = [
  <path d="M12 3a8.500 8.500 0 1 1 0 17 8.500 8.500 0 0 1 0-17zM18 17l7 7" stroke="#4aa3ad" strokeWidth="2.500" />,
  <><path d="M0 1h9v27H0z" fill="#fff" stroke="none" /><path d="M0 9h9v10H0z" fill="#35c6d0" stroke="none" /><path d="M13 4h13M13 14h13M13 23h13" strokeWidth="2" stroke="#caa" /><path d="M23 2h4v4h-4zM12 12h5v5h-5z" fill="#7fba00" stroke="none" /><path d="M12 2h4v4h-4zM23 12h4v5h-4z" fill="#f3c27a" stroke="none" /><path d="M12 21h4v5h-4zM23 21h4v5h-4z" fill="#c2315b" stroke="none" /></>,
  <><path d="M0 5h27v22H0z" fill="#fff" stroke="none" /><path d="M0 5h27v5H0z" fill="#8cc3ea" stroke="none" /><path d="M4 1v5M14 1v5M23 1v5" stroke="#4f8fc4" strokeWidth="2" /><path d="M5 13h5v5H5zM5 21h5v5H5z" fill="#628a80" stroke="none" /><path d="M17 13h5v5h-5zM17 21h5v5h-5z" fill="#f0563a" stroke="none" /></>,
  <><path d="M0 8h27v12H0z" fill="#fff" stroke="none" /><path d="M4 7h19v14H4z" fill="#4a7dbd" stroke="#16365f" /><path d="M2 2h23M7 26h14" strokeWidth="3" stroke="#666" /></>,
  <><path d="M0 1h27v27H0z" fill="#fff" stroke="none" /><path d="M0 10h27M0 19h27M8 1v27M17 1v27" stroke="#bbb" /><circle cx="12" cy="6" r="2" fill="#a35cae" stroke="none" /><path d="M19 8l6-4" stroke="#c36f9d" strokeWidth="2" /><path d="M10 17l2-4 3 4z" fill="#3bb08f" stroke="none" /><path d="M19 13v3h6v-3" stroke="#35b8a0" strokeWidth="2" /><path d="M10 22h4v4h-4z" fill="#ee9a77" stroke="none" /><path d="M19 26l6-4" stroke="#ee9a77" strokeWidth="2" /></>,
];

const DoubleChev = () => (
  <svg width="12" height="14" viewBox="0 0 12 14" fill="none" stroke="#fff" strokeWidth="2"><path d="M1 1l5 6-5 6M6 1l5 6-5 6" /></svg>
);

function VisualPane() {
  return (
    <aside className="flex w-[272px] shrink-0 flex-col border-r border-l border-[#666] bg-[#141414] text-white">
      <div className="flex items-center justify-between pt-[13px] pr-[15px] pl-3">
        <h2 className="text-[22px] leading-8 font-semibold">Visualizations</h2>
        <button aria-label="Collapse visualizations"><DoubleChev /></button>
      </div>
      <h3 className="mt-3 pl-3 text-[16px] leading-6 font-semibold">Build visual</h3>
      <div className="mt-[5px] flex gap-14 pl-3">
        <button aria-label="Build" className="flex size-12 items-center justify-center rounded bg-[#292929]">
          <svg width="36" height="38" viewBox="0 0 36 38"><path d="M0 1.500h29" stroke="#a9a19f" strokeWidth="2" /><g fill="#2bb09a" stroke="#ddd" strokeDasharray="3 2" strokeWidth="1.500"><path d="M1 9h34v11H1zM1 25h34v11H1z" /></g></svg>
        </button>
        <button aria-label="Format" className="flex items-center">
          <Ico size={38}>
            <path d="M7 37H2V1h15l10 10v5" stroke="#a8a8a8" />
            <path d="M17 1v10h10z" fill="#fff" stroke="none" />
            <path d="M37 14L24 31l-4-4 15-14q2-1 2 1zM20 27q-6 0-6 5 0 4-5 4 13 3 15-5" stroke="#bdbdbd" />
          </Ico>
        </button>
      </div>
      <svg height="12" viewBox="0 0 270 12" className="mt-2 w-full" fill="none" stroke="#777" strokeWidth="1.500"><path d="M0 11H24L36 1 48 11H270" /></svg>
      <div className="mt-4 grid grid-cols-[repeat(6,28px)] gap-3.5 pl-4">
        {gallery.map((g, i) => (
          <button key={i} aria-label={`Visual ${i + 1}`}>
            <svg width="28" height="28" viewBox="0 0 28 28" fill="none" stroke={W} strokeWidth="1.300" overflow="visible">{g}</svg>
          </button>
        ))}
        <button aria-label="More visuals" className="flex h-7 items-start justify-center pt-2.5">
          <svg width="16" height="4" viewBox="0 0 16 4" fill="#fff"><circle cx="2" cy="2" r="1.800" /><circle cx="8" cy="2" r="1.800" /><circle cx="14" cy="2" r="1.800" /></svg>
        </button>
      </div>
      <div className="mt-2.5 mr-2.5 ml-2 border-t border-dashed border-[#ddd]" />
      <div className="mt-2.5 grid grid-cols-[repeat(5,28px)] gap-3.5 pl-4">
        {customVisuals.map((g, i) => (
          <button key={i} aria-label={`Custom visual ${i + 1}`}>
            <svg width="28" height="28" viewBox="0 0 28 28" fill="none" stroke={W} strokeWidth="1.200">{g}</svg>
          </button>
        ))}
      </div>
      <div className="mt-[13px] flex h-[151px] border-t border-[#ddd]">
        <div className="min-w-0 flex-1 overflow-hidden pl-1.5 text-[17px] leading-6">
          <div className="mt-3 pl-3">Values</div>
          <div className="mt-2 h-[41px] border border-dashed border-[#777] pl-3.5 leading-[38px]">Add data fields here</div>
          <div className="mt-4 pl-3 font-semibold">Drill through</div>
          <label className="mt-3.5 flex items-start justify-between pr-6 pl-3">
            <span>Cross-report</span>
            <span className="flex h-6 w-12 items-center gap-1.5 rounded-full border border-[#aaa] px-2 text-[11px] text-[#aaa]">
              <input type="checkbox" role="switch" className="size-2.5 appearance-none rounded-full bg-[#aaa]" />
              Off
            </span>
          </label>
        </div>
        <div className="mt-1 h-[82px] w-[9px] rounded-full bg-[#adadad]" />
      </div>
    </aside>
  );
}

const TableIcon = ({ calc }) => (
  <Ico size={22}>
    <path d="M4 2h12q3 0 3 3v12q0 3-3 3H4q-3 0-3-3V5q0-3 3-3zM1 8h18M1 14h18M7 2v18M13 2v18" stroke="#e8e8e8" />
    {calc && <><path d="M11 8h11v14H11z" fill="#e8e8e8" stroke="#141414" /><path d="M13 11h7M13.500 14.500h1.500M16 14.500h1.500M19 14.500h1M13.500 18h1.500M16 18h1.500M19 18h1" stroke="#141414" /></>}
  </Ico>
);

function DataPane() {
  return (
    <aside className="min-w-0 flex-1 overflow-hidden bg-[#141414] text-white">
      <div className="flex items-center justify-between pt-[13px] pr-[5px] pl-3">
        <h2 className="text-[22px] leading-8 font-semibold">Data</h2>
        <button aria-label="Collapse data"><DoubleChev /></button>
      </div>
      <label className="mt-6 ml-1.5 flex h-9 items-center gap-2.5 rounded-l-md border border-r-0 border-[#777] bg-[#242424] pl-4.5">
        <SearchGlyph size={22} color="#aaa" />
        <input aria-label="Search data" placeholder="Search" className="min-w-0 flex-1 bg-transparent text-[19px] placeholder-[#999] outline-none" />
      </label>
      <ul className="mt-3.5 text-[17px] leading-9">
        {["ClientSummary", "MonthTable", "Sheet1"].map((t) => (
          <li key={t}>
            <button className="flex items-center gap-2 pl-[23px]">
              <Chev size={12} className="-rotate-90" />
              <TableIcon calc={t !== "Sheet1"} />
              <span className="-ml-1">{t}</span>
            </button>
          </li>
        ))}
      </ul>
    </aside>
  );
}

function StatusBar() {
  return (
    <footer className="flex h-[37px] shrink-0 items-center border-t border-[#666] bg-[#141414] text-[17px] text-[#d6d6d6]">
      <span className="-ml-2 flex-1">Page 1 of 1</span>
      <button aria-label="Zoom out" className="mr-2 w-3 text-[19px]">-</button>
      <div className="relative flex items-center">
        <input
          type="range" min="10" max="190" defaultValue="58" aria-label="Zoom"
          className="h-px w-[150px] appearance-none bg-[#d0d0d0] [&::-webkit-slider-thumb]:h-[17px] [&::-webkit-slider-thumb]:w-1.5 [&::-webkit-slider-thumb]:appearance-none [&::-webkit-slider-thumb]:bg-[#d6d6d6]"
        />
        <span className="absolute top-1/2 left-1/2 h-2 w-0.5 -translate-y-1/2 bg-[#d0d0d0]" />
      </div>
      <button aria-label="Zoom in" className="ml-2"><Ico size={12}><path d="M6 0v12M0 6h12" strokeWidth="2" /></Ico></button>
      <span className="ml-5">60%</span>
      <button aria-label="Fit to page" className="mr-[18px] ml-[30px]"><Ico size={22}><rect x="1" y="3" width="20" height="16" rx="3" strokeWidth="2" /><path d="M5 9V7h3M14 7h3v2M17 13v2h-3M8 15H5v-2" /></Ico></button>
    </footer>
  );
}

/* ---------- taskbar ---------- */

const Grad = ({ id, a, b }) => (
  <linearGradient id={id} x1="0" y1="0" x2="1" y2="1"><stop offset="0" stopColor={a} /><stop offset="1" stopColor={b} /></linearGradient>
);

const apps = [
  { n: "Task view", s: <><Grad id="tv" a="#555" b="#111" /><rect x="0" y="9" width="27" height="25" rx="1" fill="url(#tv)" /><rect x="9" y="0" width="26" height="24" rx="1" fill="#fff" opacity=".75" /></> },
  { n: "File Explorer", dot: "bg-[#888]", s: <><Grad id="fe" a="#ffd95a" b="#f0b02c" /><path d="M0 2q0-2 2-2h9l3 3v5H0z" fill="#d9930f" /><path d="M0 5h13l3-3h20v32H0z" fill="url(#fe)" /><path d="M6 34V26q0-4 4-4h16q4 0 4 4v8z" fill="#0f6cbd" /><path d="M12 28h12" stroke="#0a3d70" strokeWidth="2" /></> },
  { n: "Edge", s: <><Grad id="ed" a="#1b9de2" b="#5be07a" /><circle cx="18" cy="17" r="18" fill="#0c59a4" /><path d="M0 17A18 18 0 0 1 36 17q0 8-8 8-7 0-7-5 2-2 1-5-3-8-12-7-8 1-10 9z" fill="url(#ed)" /><path d="M1 22Q2 12 12 12q7 0 8 6-8 3-3 12-9 4-14-2z" fill="#1b78cc" /><path d="M15 16q5-3 7 2-2 3 0 5 4 4 12 1l2-3v5q-7 5-15 1-6-4-6-11z" fill="#e8d5f5" /><rect x="0" y="23" width="18" height="12" rx="1" fill="#c5780f" /><path d="M0 28h18" stroke="#7a4306" /><path d="M6 23v-3h6v3" stroke="#7a4306" strokeWidth="2" fill="none" /></> },
  { n: "Teams", s: <><circle cx="19" cy="6" r="6" fill="#7b83eb" /><circle cx="30" cy="7" r="4" fill="#5059c9" /><path d="M24 13h11v13q-1 6-7 6-4 0-4-4z" fill="#5059c9" /><path d="M10 13h17v13q-1 8-8 8-9 0-9-9z" fill="#7b83eb" /><rect x="0" y="8" width="18" height="18" rx="2" fill="#464eb8" /><text x="4.500" y="22" fontSize="14" fontWeight="700" fill="#fff">T</text></> },
  { n: "Chrome", dot: "bg-[#888]", s: <><circle cx="18" cy="17" r="18" fill="#fbc116" /><path d="M18 17L2.400 8A18 18 0 0 1 33.600 8z" fill="#e33b2e" /><path d="M2.400 8A18 18 0 0 0 16 35l8-14-6-4z" fill="#2ba24c" /><path d="M2.400 8A18 18 0 0 1 33.600 8H18z" fill="#e33b2e" /><circle cx="18" cy="17" r="9" fill="#fff" /><circle cx="18" cy="17" r="7" fill="#2a7de9" /></> },
  { n: "Outlook", hot: true, dot: "bg-[#c42b1c]", s: <><path d="M9 4h20v28H9z" fill="#1490df" /><path d="M9 18l13 8 13-8v15H9z" fill="#28a8ea" /><path d="M9 33l26-15v15z" fill="#0f6cbd" /><rect x="0" y="9" width="18" height="18" rx="2" fill="#0f5fb5" /><text x="3" y="23" fontSize="14" fontWeight="700" fill="#fff">O</text><circle cx="32" cy="3" r="12" fill="#0a5cad" /><path d="M25-2h14v10H25zM25-1l7 5 7-5" fill="none" stroke="#fff" strokeWidth="1.600" /></> },
  { n: "Photos", dot: "bg-[#888]", s: <><Grad id="ph" a="#1c78c4" b="#5a3aa8" /><rect x="2" y="1" width="32" height="33" rx="4" fill="url(#ph)" /><path d="M3 32L18 14q3-3 6 0l10 14v2q0 4-4 4H6z" fill="#1fa6e8" /><path d="M4 30l14-16q3-3 5-1L8 34H6z" fill="#4fd0f5" /><circle cx="26" cy="7" r="3" fill="#fff" /></> },
  { n: "Power BI", lit: true, dot: "bg-[#1173c4]", s: <><path d="M0-1h36v36H0z" fill="#0b6fd0" /><path d="M19-1h13v36H19z" fill="#d89b0c" /><path d="M12 8h12v27H12z" fill="#f0b82a" /><path d="M4 17h13v18H4z" fill="#f6d04d" /></> },
];

function Taskbar() {
  return (
    <footer className="flex h-16 shrink-0 items-center border-t-2 border-[#b5a3bf] bg-[#e8d5f5] pt-1 text-[17px] leading-6 text-[#222]">
      <button className="flex flex-1 items-center gap-2.5 pl-[18px] text-left">
        <svg width="34" height="46" viewBox="0 0 34 46" overflow="visible">
          <circle cx="15" cy="19" r="15" fill="#f29a1f" />
          <path d="M9 38a6 6 0 0 1 0-12 9 9 0 0 1 17-1 6 6 0 0 1 2 13z" fill="#a9c8f2" />
          <circle cx="26" cy="7" r="12" fill="#c42b1c" />
          <text x="21" y="13" fontSize="16" fill="#fff">2</text>
        </svg>
        <span>25°C<br /><span className="text-[#5d5168]">Partly sunny</span></span>
      </button>
      <div className="ml-3.5 flex items-center">
        <button aria-label="Start" className="mr-5">
          <svg width="36" height="36" viewBox="0 0 36 36"><Grad id="win" a="#4cc2f5" b="#0067c8" /><path d="M0 0h17v17H0zM18.500 0h17v17h-17zM0 18.500h17v17H0zM18.500 18.500h17v17h-17z" fill="url(#win)" /></svg>
        </button>
        <label className="flex h-[46px] w-[328px] items-center gap-3.5 rounded-full border-2 border-[#c9b6d6] bg-[#f7eefb] pr-4 pl-4">
          <SearchGlyph size={23} />
          <input aria-label="Search Windows" placeholder="Search" className="min-w-0 flex-1 bg-transparent text-[18px] placeholder-[#5a5560] outline-none" />
          <svg width="42" height="38" viewBox="0 0 42 38">
            <path d="M1 19h40a20 19 0 0 1-40 0z" fill="#5b86e0" />
            <path d="M8 20h22l4 6-6 2-4 9-5-3-2-7-8-2zM30 30h4l-2 4z" fill="#3f8f2c" />
            <path d="M2 8h4v12H2zM17 3l3-3 3 3v16h-6zM31 6h4v13h-4z" fill="#b59f8d" />
            <path d="M7 4l3-2v17H7zM36 8h4v11h-4z" fill="#7a6a60" />
            <path d="M12 6h4v13h-4z" fill="#4ba3dc" />
            <path d="M26 2q4-4 4 1v16h-4z" fill="#1f9a9a" />
          </svg>
        </label>
        <div className="ml-[5px] flex">
          {apps.map((a) => (
            <button key={a.n} aria-label={a.n} className={`relative mx-[3px] flex h-[58px] w-[60px] items-center justify-center rounded-md ${a.hot ? "border-r-6 border-[#e4a49e] bg-[#e9b0ab]" : a.lit ? "bg-[#f4ecfa]" : ""}`}>
              <svg width="36" height="34" viewBox="0 0 36 34" overflow="visible" fontFamily="Open Sans, sans-serif">{a.s}</svg>
              {a.dot && <span className={`absolute bottom-0 h-1 rounded-full ${a.lit ? "w-6" : "w-2"} ${a.dot}`} />}
            </button>
          ))}
        </div>
      </div>
      <div className="flex flex-1 items-center justify-end gap-[13px] pr-[18px]">
        <svg width="18" height="12" viewBox="0 0 18 12" fill="none" stroke="#222" strokeWidth="2" className="mr-3.5"><path d="M1 11l8-9 8 9" /></svg>
        <svg width="25" height="18" viewBox="0 0 25 18" className="mr-2"><path d="M6 17a5 5 0 0 1-1-10A8 8 0 0 1 19 6a6 6 0 0 1 1 11z" fill="#2393e4" /><path d="M5 7A8 8 0 0 1 19 6q-6 0-9 5z" fill="#0f5fb5" /></svg>
        <svg width="25" height="20" viewBox="0 0 25 20" fill="none" stroke="#222" strokeWidth="1.800"><path d="M1 7q11-11 23 0M4.500 11q8-8 16 0M8 14.500q4.500-4.500 9 0" /><circle cx="12.500" cy="17.500" r="1.500" fill="#222" /></svg>
        <svg width="25" height="22" viewBox="0 0 25 22" fill="none" stroke="#222" strokeWidth="1.600"><path d="M1 8h4l6-5v16l-6-5H1zM14 8q2 3 0 6M17 5q5 6 0 12M20 2q7 9 0 18" /></svg>
        <svg width="24" height="22" viewBox="0 0 24 22" fill="none" stroke="#222" strokeWidth="2"><path d="M8 5H4Q1 5 1 8v8q0 3 3 3h12q4 0 4-3V8q0-3-3-3M22 10v5" /><path d="M4 9h4v4h4l4-3v6H4z" fill="#222" stroke="none" /><path d="M13 0l-4 8h6l-4 5" /></svg>
        <div className="ml-3.5 text-right">10:54 AM<br />7/11/2025</div>
      </div>
    </footer>
  );
}

export default function App() {
  return (
    <div className="flex h-screen w-full flex-col overflow-hidden bg-[#141414] font-['Open_Sans',sans-serif]">
      <TitleBar />
      <Menu />
      <Ribbon />
      <main className="flex min-h-0 flex-1">
        <LeftNav />
        <div className="flex min-w-0 flex-1 flex-col">
          <div className="flex min-h-0 flex-1">
            <Report />
            <Filters />
          </div>
          <PageTabs />
        </div>
        <div className="flex w-[532px] shrink-0">
          <VisualPane />
          <DataPane />
        </div>
      </main>
      <StatusBar />
      <Taskbar />
    </div>
  );
}
